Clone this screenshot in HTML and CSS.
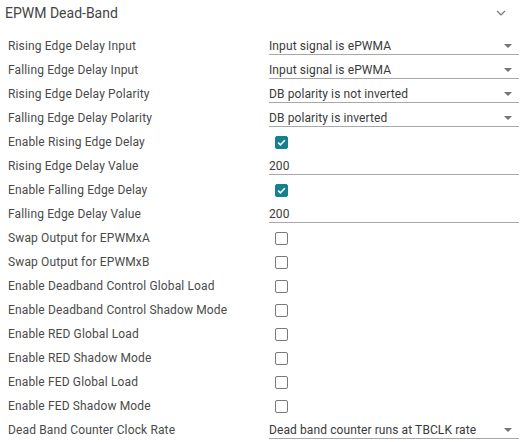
FILE: index.html
```html
<!DOCTYPE html>
<html>
<head>
<meta charset="utf-8">
<link rel="stylesheet" href="styles.css">
</head>
<body>
<div class="panel">
  <div class="header">
    <span class="title">EPWM Dead-Band</span>
    <svg class="chevron" width="10" height="6" viewBox="0 0 10 6"><path d="M1 1 L5 5 L9 1" fill="none" stroke="#757575" stroke-width="1.2"/></svg>
  </div>
  <div class="rows">
    <div class="label">Rising Edge Delay Input</div>
    <div class="field select"><span>Input signal is ePWMA</span><i class="arrow"></i></div>
    <div class="label">Falling Edge Delay Input</div>
    <div class="field select"><span>Input signal is ePWMA</span><i class="arrow"></i></div>
    <div class="label">Rising Edge Delay Polarity</div>
    <div class="field select"><span>DB polarity is not inverted</span><i class="arrow"></i></div>
    <div class="label">Falling Edge Delay Polarity</div>
    <div class="field select"><span>DB polarity is inverted</span><i class="arrow"></i></div>
    <div class="label">Enable Rising Edge Delay</div>
    <div class="check-cell"><span class="cb checked"><svg width="11" height="11" viewBox="0 0 11 11"><path d="M2.2 5.6 L4.4 7.8 L8.8 3.3" fill="none" stroke="#fff" stroke-width="1.6"/></svg></span></div>
    <div class="label">Rising Edge Delay Value</div>
    <div class="field"><span>200</span></div>
    <div class="label">Enable Falling Edge Delay</div>
    <div class="check-cell"><span class="cb checked"><svg width="11" height="11" viewBox="0 0 11 11"><path d="M2.2 5.6 L4.4 7.8 L8.8 3.3" fill="none" stroke="#fff" stroke-width="1.6"/></svg></span></div>
    <div class="label">Falling Edge Delay Value</div>
    <div class="field"><span>200</span></div>
    <div class="label">Swap Output for EPWMxA</div>
    <div class="check-cell"><span class="cb"></span></div>
    <div class="label">Swap Output for EPWMxB</div>
    <div class="check-cell"><span class="cb"></span></div>
    <div class="label">Enable Deadband Control Global Load</div>
    <div class="check-cell"><span class="cb"></span></div>
    <div class="label">Enable Deadband Control Shadow Mode</div>
    <div class="check-cell"><span class="cb"></span></div>
    <div class="label">Enable RED Global Load</div>
    <div class="check-cell"><span class="cb"></span></div>
    <div class="label">Enable RED Shadow Mode</div>
    <div class="check-cell"><span class="cb"></span></div>
    <div class="label">Enable FED Global Load</div>
    <div class="check-cell"><span class="cb"></span></div>
    <div class="label">Enable FED Shadow Mode</div>
    <div class="check-cell"><span class="cb"></span></div>
    <div class="label">Dead Band Counter Clock Rate</div>
    <div class="field select"><span>Dead band counter runs at TBCLK rate</span><i class="arrow"></i></div>
  </div>
</div>
</body>
</html>
```
FILE: styles.css
```css
html, body {
  margin: 0;
  padding: 0;
  background: #fff;
}
body {
  font-family: Roboto, "Liberation Sans", sans-serif;
  color: #333;
}
.panel {
  width: 526px;
}
.header {
  display: flex;
  align-items: center;
  justify-content: space-between;
  height: 25px;
  padding: 0 20px 0 5px;
}
.title {
  font-size: 14px;
  color: #444;
}
.chevron {
  display: block;
}
.rows {
  display: grid;
  grid-template-columns: 269px 250px;
  grid-auto-rows: 24px;
  padding-top: 9px;
}
.label {
  font-size: 12px;
  letter-spacing: 0.14px;
  line-height: 24px;
  padding-left: 8px;
  color: #4a4a4a;
  white-space: nowrap;
}
.field {
  height: 19px;
  border-bottom: 1px solid #a8a8a8;
  display: flex;
  align-items: center;
  justify-content: space-between;
  padding-top: 1px;
  font-size: 12px;
  letter-spacing: 0.1px;
  color: #3a3a3a;
}
.field span {
  line-height: 16px;
  padding-top: 3px;
}
.arrow {
  width: 0;
  height: 0;
  border-left: 4px solid transparent;
  border-right: 4px solid transparent;
  border-top: 4px solid #757575;
  margin-right: 7px;
  margin-top: 2px;
}
.check-cell {
  display: flex;
  align-items: center;
  padding-left: 6px;
}
.cb {
  box-sizing: border-box;
  width: 13px;
  height: 13px;
  border: 1.5px solid #7a7a7a;
  border-radius: 2px;
  display: flex;
  align-items: center;
  justify-content: center;
}
.cb.checked {
  background: #16808f;
  border-color: #16808f;
}
.cb svg {
  display: block;
}
```
